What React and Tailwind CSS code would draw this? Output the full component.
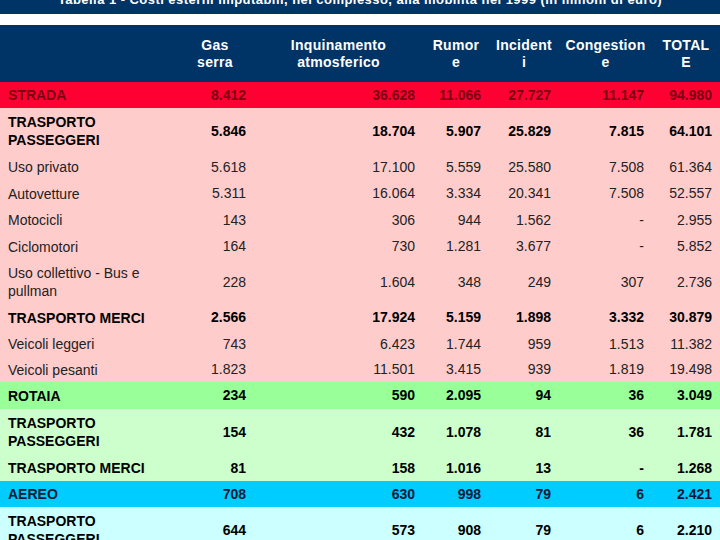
import React from "react";

const rows = [
  { label: "STRADA", vals: ["8.412", "36.628", "11.066", "27.727", "11.147", "94.980"], bg: "bg-[#ff0033]", txt: "text-[#7a0010] font-bold", h: "h-[26px]" },
  { label: "TRASPORTO PASSEGGERI", vals: ["5.846", "18.704", "5.907", "25.829", "7.815", "64.101"], bg: "bg-[#ffcccc]", txt: "text-black font-bold", h: "h-[46px]" },
  { label: "Uso privato", vals: ["5.618", "17.100", "5.559", "25.580", "7.508", "61.364"], bg: "bg-[#ffcccc]", txt: "text-[#222]", h: "h-[26px]" },
  { label: "Autovetture", vals: ["5.311", "16.064", "3.334", "20.341", "7.508", "52.557"], bg: "bg-[#ffcccc]", txt: "text-[#222]", h: "h-[27px]" },
  { label: "Motocicli", vals: ["143", "306", "944", "1.562", "-", "2.955"], bg: "bg-[#ffcccc]", txt: "text-[#222]", h: "h-[26px]" },
  { label: "Ciclomotori", vals: ["164", "730", "1.281", "3.677", "-", "5.852"], bg: "bg-[#ffcccc]", txt: "text-[#222]", h: "h-[27px]" },
  { label: "Uso collettivo - Bus e pullman", vals: ["228", "1.604", "348", "249", "307", "2.736"], bg: "bg-[#ffcccc]", txt: "text-[#222]", h: "h-[44px]" },
  { label: "TRASPORTO MERCI", vals: ["2.566", "17.924", "5.159", "1.898", "3.332", "30.879"], bg: "bg-[#ffcccc]", txt: "text-black font-bold", h: "h-[27px]" },
  { label: "Veicoli leggeri", vals: ["743", "6.423", "1.744", "959", "1.513", "11.382"], bg: "bg-[#ffcccc]", txt: "text-[#222]", h: "h-[26px]" },
  { label: "Veicoli pesanti", vals: ["1.823", "11.501", "3.415", "939", "1.819", "19.498"], bg: "bg-[#ffcccc]", txt: "text-[#222]", h: "h-[25px]" },
  { label: "ROTAIA", vals: ["234", "590", "2.095", "94", "36", "3.049"], bg: "bg-[#99ff99]", txt: "text-black font-bold", h: "h-[27px]" },
  { label: "TRASPORTO PASSEGGERI", vals: ["154", "432", "1.078", "81", "36", "1.781"], bg: "bg-[#ccffcc]", txt: "text-black font-bold", h: "h-[46px]" },
  { label: "TRASPORTO MERCI", vals: ["81", "158", "1.016", "13", "-", "1.268"], bg: "bg-[#ccffcc]", txt: "text-black font-bold", h: "h-[26px]" },
  { label: "AEREO", vals: ["708", "630", "998", "79", "6", "2.421"], bg: "bg-[#00ccff]", txt: "text-[#0a1838] font-bold", h: "h-[26px]" },
  { label: "TRASPORTO PASSEGGERI", vals: ["644", "573", "908", "79", "6", "2.210"], bg: "bg-[#ccffff]", txt: "text-black font-bold", h: "h-[46px]" },
];

const headers = [
  ["Gas", "serra"],
  ["Inquinamento", "atmosferico"],
  ["Rumor", "e"],
  ["Incident", "i"],
  ["Congestion", "e"],
  ["TOTAL", "E"],
];

const grid = "grid grid-cols-[176px_78px_169px_66px_70px_93px_68px]";

export default function App() {
  return (
    <div className="w-[720px] h-[540px] overflow-hidden bg-white font-['Liberation_Sans',Arial,sans-serif] text-[14px]">
      <div className="h-[14px] bg-[#003366] overflow-hidden">
        <div className="mt-[-8px] text-center text-white font-bold text-[13px] leading-[15px] tracking-[0.45px]">
          Tabella 1 - Costi esterni imputabili, nel complesso, alla mobilità nel 1999 (in milioni di euro)
        </div>
      </div>
      <div className="h-[11px] bg-white" />
      <div className={`${grid} h-[57px] bg-[#003366] text-white font-bold`}>
        <div />
        {headers.map((h, i) => (
          <div key={i} className="flex flex-col items-center justify-center text-center leading-[17px] tracking-[0.3px]">
            <span>{h[0]}</span>
            <span>{h[1]}</span>
          </div>
        ))}
      </div>
      {rows.map((r, i) => (
        <div key={i} className={`${grid} ${r.h} ${r.bg} ${r.txt}`}>
          <div className="flex items-center pl-2 pr-1 leading-[18px]">
            <span>{r.label}</span>
          </div>
          {r.vals.map((v, j) => (
            <div key={j} className="flex items-center justify-end pr-2">
              {v}
            </div>
          ))}
        </div>
      ))}
    </div>
  );
}
